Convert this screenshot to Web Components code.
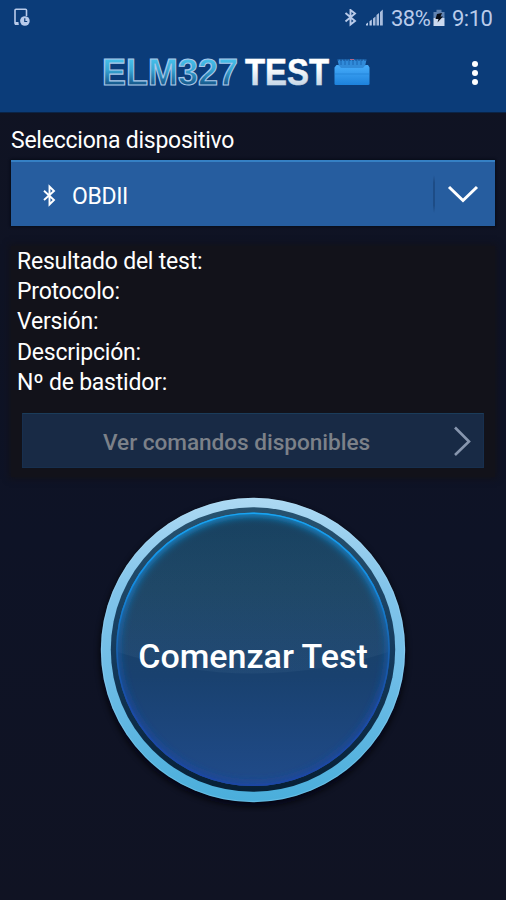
<!DOCTYPE html>
<html lang="es">
<head>
<meta charset="utf-8">
<title>ELM327 Test</title>
<style>
html,body{margin:0;padding:0;height:100%;background:#101323}
body{font-family:Roboto,"Liberation Sans",sans-serif;color:#fff;overflow:hidden}
</style>
</head>
<body>
<elm-app></elm-app>
<script>
const define = (name, html) => {
  const tpl = document.createElement('template');
  tpl.innerHTML = html;
  customElements.define(name, class extends HTMLElement {
    constructor() {
      super();
      this.attachShadow({mode: 'open'}).appendChild(tpl.content.cloneNode(true));
    }
  });
};

define('status-bar', `
<style>
:host{display:flex;align-items:center;height:36px;padding:0 14px 0 13px;color:#b9cbea;font-size:22px;box-sizing:border-box}
svg{display:block;flex:none}
.gap{flex:1}
.pct{margin-left:7px;width:39px;white-space:nowrap;letter-spacing:-.5px}
.time{margin-left:7px;width:40px;white-space:nowrap;letter-spacing:-.5px}
.batt{margin-left:3px}
</style>
<svg width="18" height="20" viewBox="0 0 18 20"><path d="M5.500 16.300H3Q2 16.300 2 15.300V2.200Q2 1.200 3 1.200H12.500Q13.500 1.200 13.500 2.200V8" fill="none" stroke="#b9cbea" stroke-width="1.600"/><path d="M2 14H5.500V17H2z" fill="#b9cbea"/><circle cx="11.900" cy="13" r="4.800" fill="#b9cbea"/><path d="M11.800 10.300V13.500H14.200" fill="none" stroke="#0b3c79" stroke-width="1.200"/></svg>
<span class="gap"></span>
<svg width="13" height="18" viewBox="0 0 13 18"><path d="M1.500 4 11 12 6.500 15.500V1L11 4.500 1.500 12.500" fill="none" stroke="#b9cbea" stroke-width="1.900"/></svg>
<svg width="19" height="20" viewBox="0 0 19 20" style="margin-left:8px"><path d="M1 17.500V16L3 14.500V17.500zM4.500 17.500V13.300L6.800 11.500V17.500z" fill="#b9cbea"/><path d="M8 17.500V10.500L10.500 8.500V17.500zM11.500 17.500V7L14 5V17.500zM15 17.500V4L17.800 1.500V17.500z" fill="#a9bddd"/></svg>
<span class="pct">38%</span>
<svg class="batt" width="12" height="18" viewBox="0 0 12 18"><path d="M.5 3H3.500V.8H8.500V3H11.500V9H.5z" fill="#6183b1"/><path d="M.5 9H11.500V17H.5z" fill="#cbd9ef"/><path d="M4 5 9 4 7.500 7.500H10L4.500 13.500 5.500 10H2.500z" fill="#090d16"/></svg>
<span class="time">9:10</span>`);

define('brand-logo', `
<style>:host{display:block}svg{display:block}text{font-family:"Liberation Sans",Arial,sans-serif;font-weight:700;font-size:36px}</style>
<svg width="275" height="40" viewBox="100 52 275 40">
<defs>
<linearGradient id="a" gradientUnits="userSpaceOnUse" x1="0" y1="59" x2="0" y2="85"><stop offset="0" stop-color="#48c0ea"/><stop offset=".4" stop-color="#38a8d6"/><stop offset="1" stop-color="#145589"/></linearGradient>
<linearGradient id="b" gradientUnits="userSpaceOnUse" x1="0" y1="59" x2="0" y2="86"><stop offset=".3" stop-color="#fff"/><stop offset="1" stop-color="#c4d5e6"/></linearGradient>
<linearGradient id="c" x1="0" y1="0" x2="0" y2="1"><stop offset="0" stop-color="#47adfb"/><stop offset="1" stop-color="#1d82dc"/></linearGradient>
</defs>
<text x="102" y="85" textLength="136" lengthAdjust="spacingAndGlyphs" fill="url(#a)" stroke="#a9c8e9" stroke-width="1.100">ELM327</text>
<text x="245" y="85" textLength="84" lengthAdjust="spacingAndGlyphs" fill="url(#b)" stroke="url(#b)" stroke-width=".5">TEST</text>
<path d="M337.500 59.500H366.500L364.500 69H339.500z" fill="#318bd9"/>
<path d="M341 60V65M345 60V65M349 60V65M353 60V65M357 60V65M361 60V65" stroke="#1b66b3" stroke-width="1"/>
<path d="M337 60H367" stroke="#174f92" stroke-dasharray="2 1"/><path d="M350 59.500h4" stroke="#b56586"/>
<path d="M334.500 67.500 336.500 65H338.500L341 68H363L365.500 65H368L369.500 67.500V84Q369.500 85 368 85H336Q334.500 85 334.500 84z" fill="url(#c)"/>
<path d="M335 74H369" stroke="#2687dc" stroke-width="1"/>
</svg>`);

define('app-header', `
<style>
:host{display:block;height:112px;background:#0b3c79;border-bottom:1px solid #0a2345}
.bar{display:grid;grid-template-columns:275px 1fr;padding:16px 25px 0 100px;align-items:center}
.dots{display:flex;flex-direction:column;gap:3px;justify-self:end;margin-right:3px;margin-top:2px}
.dots i{width:6px;height:6px;border-radius:50%;background:#fff}
</style>
<status-bar></status-bar>
<div class="bar"><brand-logo></brand-logo><span class="dots"><i></i><i></i><i></i></span></div>`);

define('device-select', `
<style>
:host{display:flex;align-items:center;height:66px;box-sizing:border-box;border-top:2px solid #3580c4;background:#265d9f;box-shadow:0 0 2px 1px #070c18;padding-left:30px;font-size:23px}
svg{display:block}
.name{margin-left:15px;flex:1;padding-top:4px;letter-spacing:-.35px}
.bt{margin-top:3px}
.sep{width:2px;height:38px;margin-right:12px;background:linear-gradient(#265d9f,#1d4c86 20%,#1d4c86 80%,#265d9f)}
.chev{margin-right:16px;margin-top:2px}
</style>
<svg class="bt" width="16" height="24" viewBox="0 0 16 24"><path d="M3 6.800 13 16 8.500 20.500V2.500L13 7 3 16" fill="none" stroke="#fff" stroke-width="1.900"/></svg>
<span class="name"><slot></slot></span>
<i class="sep"></i>
<svg class="chev" width="32" height="20" viewBox="0 0 32 20"><path d="M2 2 16 15.500 30 2" fill="none" stroke="#fff" stroke-width="3"/></svg>`);

define('result-list', `
<style>:host{display:block;font-size:23px;line-height:30.5px;letter-spacing:-.22px}::slotted(div){height:30.400px;white-space:nowrap}</style><slot></slot>`);

define('command-button', `
<style>
:host{display:grid;grid-template-columns:1fr auto;align-items:center;height:55px;box-sizing:border-box;border:1px solid #172f4e;border-top-color:#1b3c5a;background:#182a45;color:#7c8189;font-weight:500;font-size:22.6px;letter-spacing:-.03px;padding-left:80px}
svg{display:block;margin-right:11px}span{padding-top:3px;white-space:nowrap}
</style>
<span><slot></slot></span>
<svg width="20" height="32" viewBox="0 0 20 32"><path d="M3 2.500 17 16.500 3 30" fill="none" stroke="#8796ae" stroke-width="2.600"/></svg>`);

define('round-button', `
<style>
:host{display:grid;width:320px;height:324px;place-items:center}
svg,span{grid-area:1/1}
svg{display:block}
span{font-size:34px;font-weight:500;padding-top:12px;white-space:nowrap;z-index:1}
</style>
<svg width="320" height="324" viewBox="93 487.500 320 324">
<defs>
<linearGradient id="rim" x1="0" y1="0" x2="0" y2="1"><stop offset="0" stop-color="#add9f3"/><stop offset=".3" stop-color="#82c4ea"/><stop offset=".6" stop-color="#6dbce6"/><stop offset="1" stop-color="#4aaedb"/></linearGradient>
<linearGradient id="dk" x1="0" y1="0" x2="0" y2="1"><stop offset="0" stop-color="#27526f"/><stop offset=".5" stop-color="#153c5e"/><stop offset="1" stop-color="#071f35"/></linearGradient>
<linearGradient id="face" x1="0" y1="0" x2="0" y2="1"><stop offset="0" stop-color="#174160"/><stop offset=".28" stop-color="#1a4363"/><stop offset=".6" stop-color="#19416f"/><stop offset="1" stop-color="#204b8a"/></linearGradient>
<linearGradient id="glow" gradientUnits="userSpaceOnUse" x1="0" y1="512" x2="0" y2="786"><stop offset="0" stop-color="#18a4f3"/><stop offset=".28" stop-color="#1489df"/><stop offset=".5" stop-color="#1761ae"/><stop offset=".7" stop-color="#1a4caa"/><stop offset="1" stop-color="#1b46a4"/></linearGradient>
<linearGradient id="gloss" x1="0" y1="0" x2="0" y2="1"><stop offset="0" stop-color="#fff" stop-opacity="0"/><stop offset="1" stop-color="#9ac3dd" stop-opacity=".06"/></linearGradient>
<filter id="bl" x="-10%" y="-10%" width="120%" height="120%"><feGaussianBlur stdDeviation="4"/></filter>
<filter id="sh" x="-10%" y="-10%" width="120%" height="120%"><feGaussianBlur stdDeviation="3"/></filter>
<clipPath id="cp"><circle cx="253" cy="648.800" r="136.800"/></clipPath>
</defs>
<circle cx="253" cy="653" r="153" fill="#03060e" opacity=".8" filter="url(#sh)"/>
<circle cx="253" cy="649.500" r="152.200" fill="url(#rim)"/>
<circle cx="253" cy="649.500" r="151.500" fill="none" stroke="#b8e3f6" stroke-opacity=".25"/>
<circle cx="253" cy="649" r="142.200" fill="url(#dk)"/>
<circle cx="253" cy="648.800" r="136.800" fill="url(#face)"/>
<g clip-path="url(#cp)">
<path d="M116 651Q253 695 390 651V512H116z" fill="url(#gloss)"/>
<circle cx="253" cy="648.800" r="138" fill="none" stroke="url(#glow)" stroke-width="8" filter="url(#bl)"/>
<circle cx="253" cy="648.800" r="136.300" fill="none" stroke="url(#glow)" stroke-width="2"/>
</g>
</svg>
<span><slot></slot></span>`);

define('elm-app', `
<style>
:host{display:flex;flex-direction:column;width:506px;height:900px;background:linear-gradient(#101322,#0e1326 60%,#101323)}
main{display:flex;flex-direction:column;padding:0 11px}
.label{font-size:23px;line-height:28px;margin:14px 0 5px;letter-spacing:-.24px}
.panel{margin:20px 0 0;padding:.5px 11px 9px 6px;background:#12121a;box-shadow:0 0 6px 2px #12121a}
command-button{margin:15px 0 0 5px}
round-button{align-self:center;margin-top:11px}
</style>
<app-header></app-header>
<main>
<div class="label">Selecciona dispositivo</div>
<device-select>OBDII</device-select>
<section class="panel">
<result-list><div>Resultado del test:</div><div>Protocolo:</div><div>Versión:</div><div>Descripción:</div><div>Nº de bastidor:</div></result-list>
<command-button>Ver comandos disponibles</command-button>
</section>
<round-button>Comenzar Test</round-button>
</main>`);
</script>
</body>
</html>
